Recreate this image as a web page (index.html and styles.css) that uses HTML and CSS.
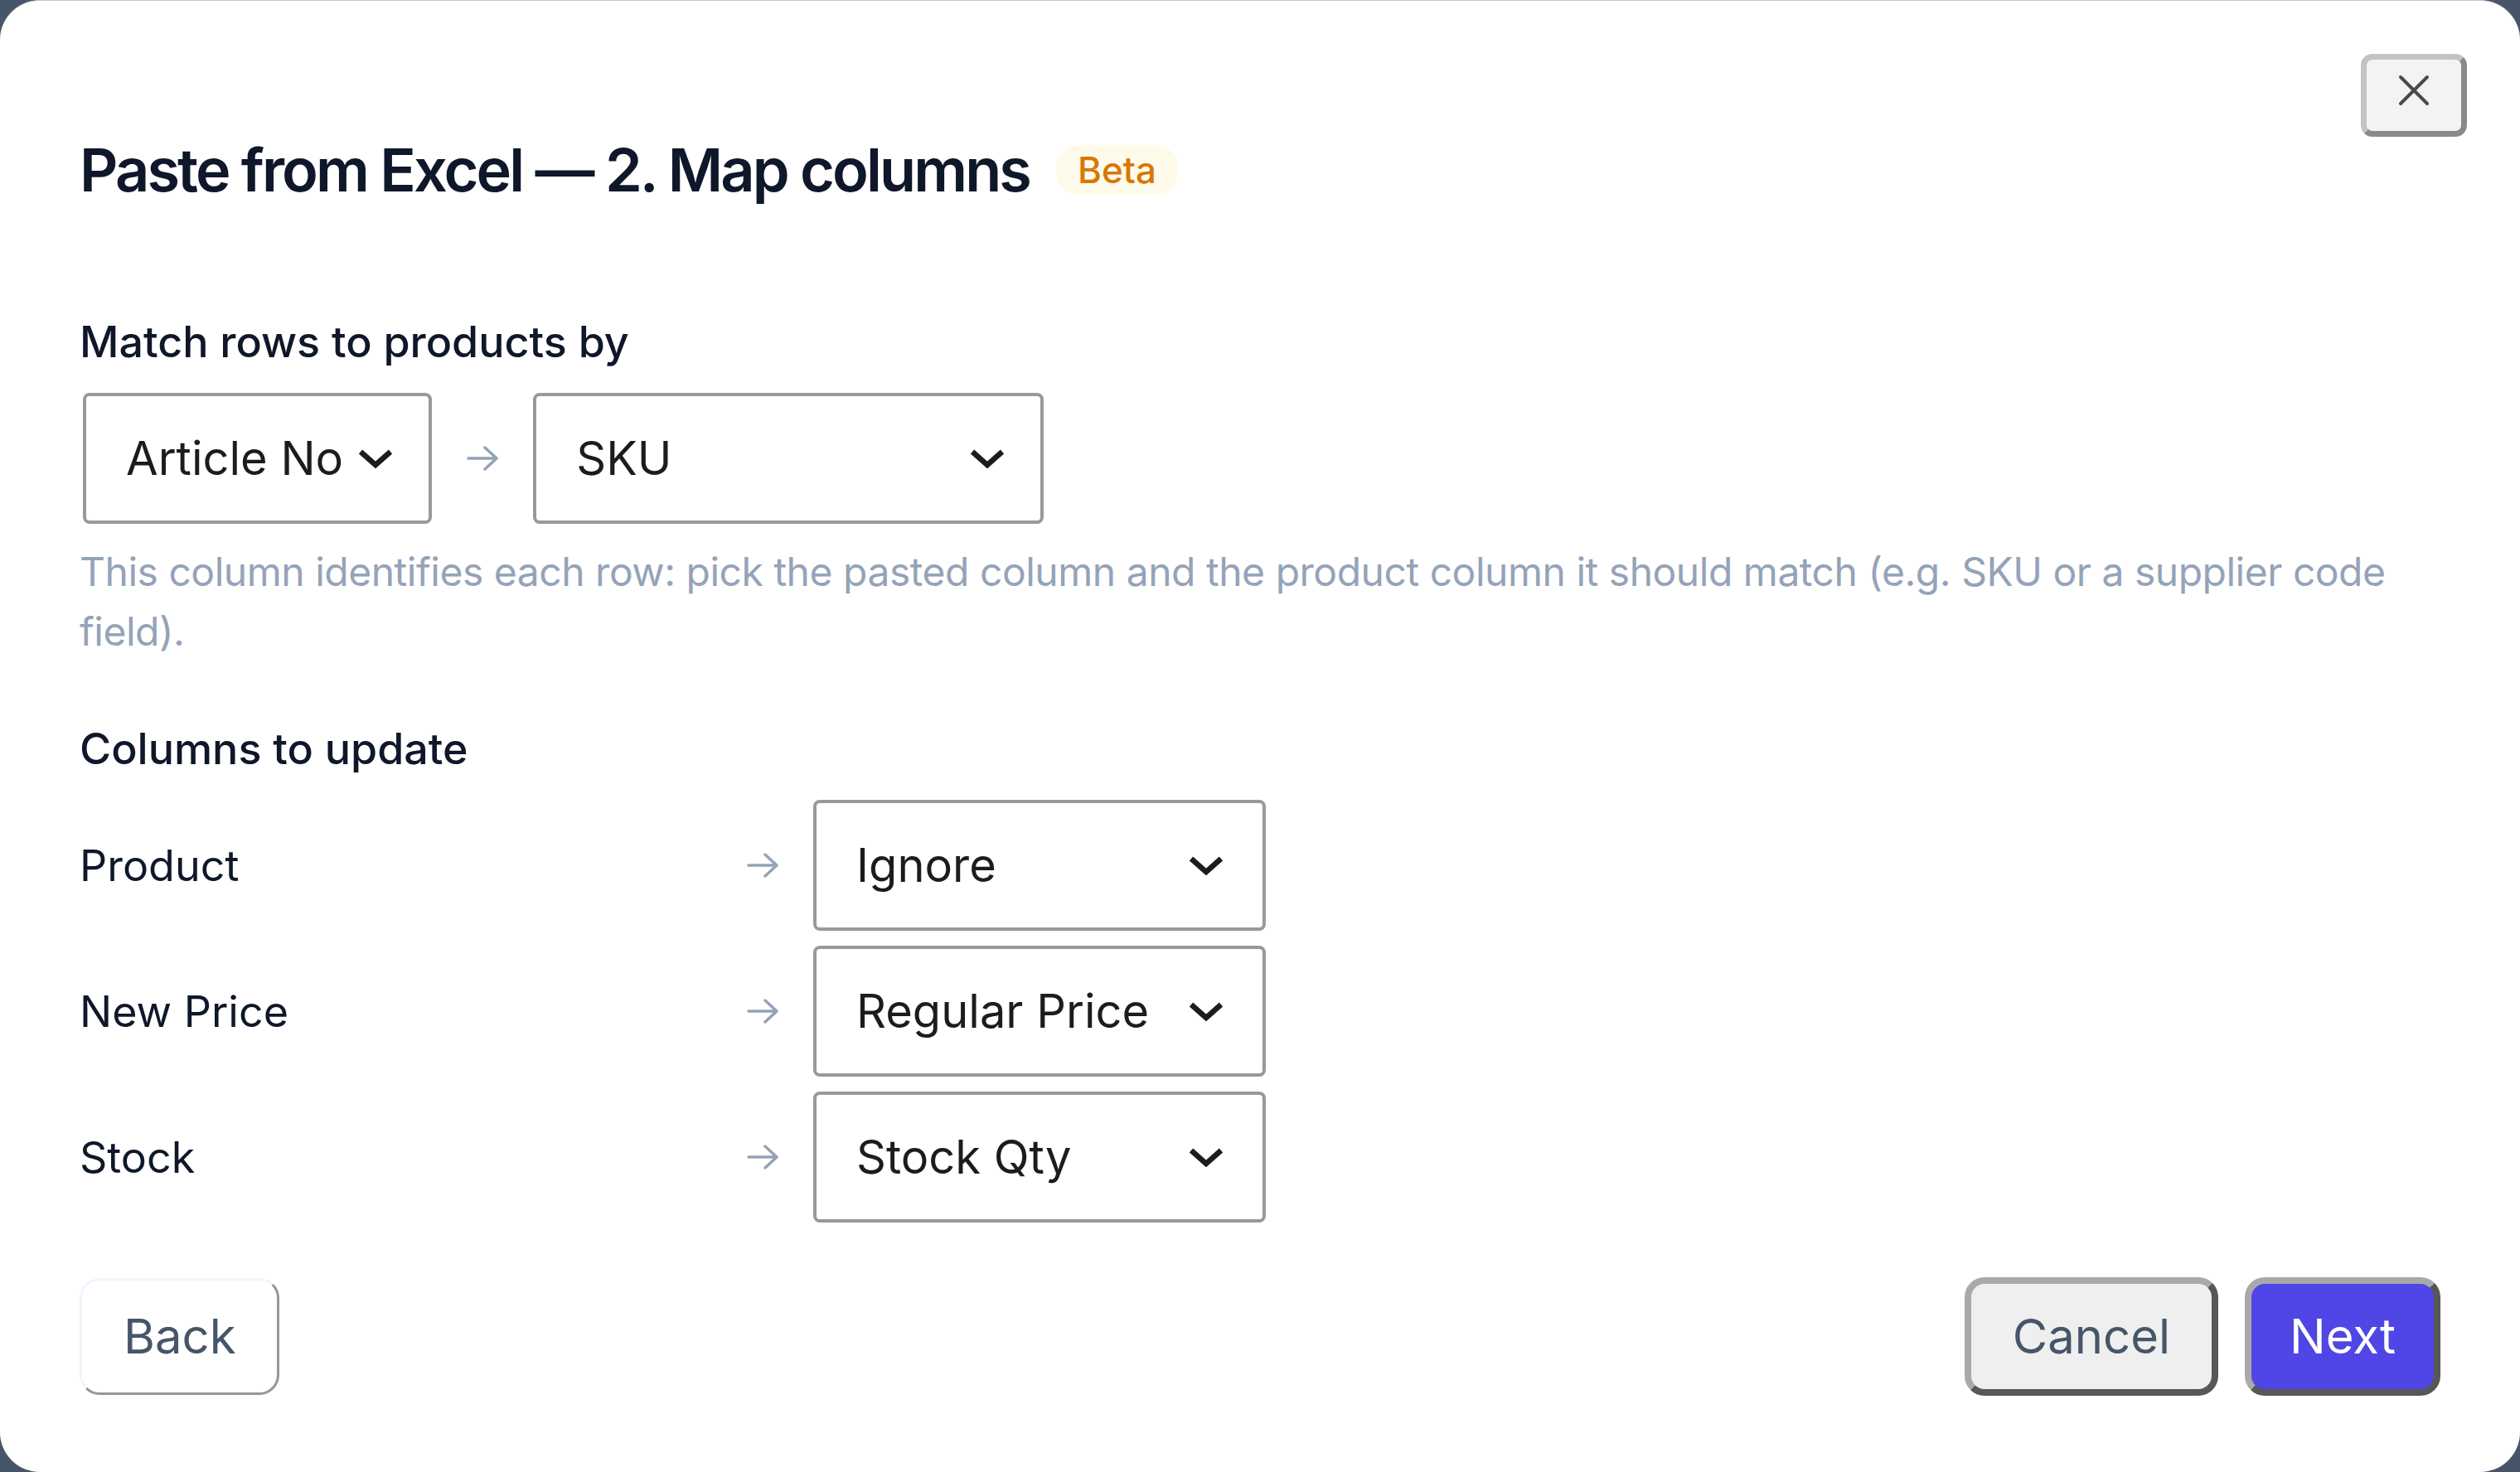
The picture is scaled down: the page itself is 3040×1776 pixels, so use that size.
FILE: index.html
```html
<!DOCTYPE html>
<html lang="en">
<head>
  <meta charset="UTF-8">
  <meta name="viewport" content="width=device-width, initial-scale=1.0">
  <title>Paste from Excel - Map columns</title>
  <link rel="stylesheet" href="styles.css">
</head>
<body>
  <div class="modal">
    <!-- Close dialog -->
    <button class="close-btn" aria-label="Close">
      <svg width="40" height="40" viewBox="0 0 40 40"><path d="M4 4 L36 36 M36 4 L4 36" /></svg>
    </button>

    <div class="title-row">
      <h2 class="title">Paste from Excel — 2. Map columns</h2>
      <span class="badge">Beta</span>
    </div>

    <!-- Key column used to match pasted rows -->
    <section class="match">
      <div class="field-label">Match rows to products by</div>
      <div class="match-row">
        <div class="select">
          <span>Article No</span>
          <svg class="chevron" width="44" height="24" viewBox="0 0 44 24"><polyline points="4,4 22,20 40,4" /></svg>
        </div>
        <svg class="map-arrow" width="38" height="30" viewBox="0 0 38 30"><path d="M2 15 H36 M22 2 L36 15 L22 28" /></svg>
        <div class="select select-key">
          <span>SKU</span>
          <svg class="chevron" width="44" height="24" viewBox="0 0 44 24"><polyline points="4,4 22,20 40,4" /></svg>
        </div>
      </div>
      <p class="hint">This column identifies each row: pick the pasted column and the product column it should match (e.g. SKU or a supplier code field).</p>
    </section>

    <!-- Pasted columns and the product field each one writes to -->
    <section class="columns">
      <div class="field-label">Columns to update</div>
      <div class="column-grid">
        <div class="col-name">Product</div>
        <svg class="map-arrow" width="38" height="30" viewBox="0 0 38 30"><path d="M2 15 H36 M22 2 L36 15 L22 28" /></svg>
        <div class="select select-target">
          <span>Ignore</span>
          <svg class="chevron" width="44" height="24" viewBox="0 0 44 24"><polyline points="4,4 22,20 40,4" /></svg>
        </div>

        <div class="col-name">New Price</div>
        <svg class="map-arrow" width="38" height="30" viewBox="0 0 38 30"><path d="M2 15 H36 M22 2 L36 15 L22 28" /></svg>
        <div class="select select-target">
          <span>Regular Price</span>
          <svg class="chevron" width="44" height="24" viewBox="0 0 44 24"><polyline points="4,4 22,20 40,4" /></svg>
        </div>

        <div class="col-name">Stock</div>
        <svg class="map-arrow" width="38" height="30" viewBox="0 0 38 30"><path d="M2 15 H36 M22 2 L36 15 L22 28" /></svg>
        <div class="select select-target">
          <span>Stock Qty</span>
          <svg class="chevron" width="44" height="24" viewBox="0 0 44 24"><polyline points="4,4 22,20 40,4" /></svg>
        </div>
      </div>
    </section>

    <div class="footer">
      <button class="btn btn-back">Back</button>
      <div class="footer-actions">
        <button class="btn btn-cancel">Cancel</button>
        <button class="btn btn-next">Next</button>
      </div>
    </div>
  </div>
</body>
</html>
```

FILE: styles.css
```css
body {
  margin: 0;
  background-color: #475569;
  font-family: Inter, "Liberation Sans", sans-serif;
}
.modal {
  position: relative;
  box-sizing: border-box;
  height: 100vh;
  display: flex;
  flex-direction: column;
  padding: 160px 96px 92px;
  background-color: #ffffff;
  border-top: 1px solid #c3cad1;
  border-radius: 48px;
}
.close-btn {
  position: absolute;
  top: 64px;
  right: 64px;
  box-sizing: border-box;
  width: 128px;
  height: 100px;
  display: flex;
  align-items: center;
  justify-content: center;
  padding: 0 0 12px;
  background-color: #f3f3f3;
  border: 7px solid;
  border-color: #c3c3c3 #8a8a8a #8a8a8a #c3c3c3;
  border-radius: 14px;
}
.close-btn svg path {
  stroke: #4a4a4a;
  stroke-width: 4;
  stroke-linecap: round;
  fill: none;
}
.title-row {
  display: flex;
  align-items: center;
  gap: 32px;
  margin-bottom: 125px;
}
.title {
  margin: 0;
  font-size: 72px;
  line-height: 88px;
  font-weight: 600;
  letter-spacing: -0.04em;
  color: #0f172a;
}
.badge {
  padding: 0 26px;
  line-height: 60px;
  font-size: 44px;
  font-weight: 500;
  color: #d97706;
  background-color: #fffbeb;
  border-radius: 26px;
}
.field-label {
  margin-bottom: 22px;
  font-size: 52px;
  line-height: 78px;
  font-weight: 500;
  color: #0f172a;
}
.match-row {
  display: flex;
  align-items: center;
  gap: 42px;
  padding-left: 4px;
}
.select {
  box-sizing: border-box;
  height: 158px;
  display: flex;
  align-items: center;
  gap: 17px;
  padding: 0 42px 0 48px;
  font-size: 56px;
  color: #1c1c1c;
  background-color: #ffffff;
  border: 4px solid #999999;
  border-radius: 8px;
}
.select .chevron {
  flex-shrink: 0;
}
.select-key {
  width: 616px;
}
.select-target {
  width: 546px;
  padding-right: 46px;
}
.select-key .chevron,
.select-target .chevron {
  margin-left: auto;
}
.chevron polyline {
  fill: none;
  stroke: #1c1c1c;
  stroke-width: 6.5;
}
.map-arrow path {
  fill: none;
  stroke: #94a3b8;
  stroke-width: 3.5;
  stroke-linecap: round;
  stroke-linejoin: round;
}
.hint {
  margin: 22px 0 0;
  font-size: 48px;
  line-height: 72px;
  letter-spacing: -0.01em;
  color: #94a3b8;
}
.columns {
  margin-top: 67px;
}
.column-grid {
  display: grid;
  grid-template-columns: 763px 38px 546px;
  grid-auto-rows: 158px;
  column-gap: 42px;
  row-gap: 18px;
  align-items: center;
}
.col-name {
  font-size: 52px;
  color: #0f172a;
}
.footer {
  margin-top: auto;
  display: flex;
  align-items: center;
  justify-content: space-between;
}
.footer-actions {
  display: flex;
  align-items: center;
  gap: 32px;
}
.btn {
  font-family: Inter, "Liberation Sans", sans-serif;
  font-size: 58px;
  line-height: 87px;
  padding: 20px 50px;
  border-radius: 24px;
  border: 8px solid;
  border-color: #a9a9a9 #575757 #575757 #a9a9a9;
  color: #475569;
  cursor: pointer;
}
.btn-back {
  padding: 24px 50px;
  border-width: 3px;
  border-color: #eff6ff #94979c #94979c #eff6ff;
  background-color: #ffffff;
}
.btn-cancel {
  background-color: #efefef;
}
.btn-next {
  padding: 20px 46px;
  background-color: #4f46e5;
  color: #ffffff;
}
```
